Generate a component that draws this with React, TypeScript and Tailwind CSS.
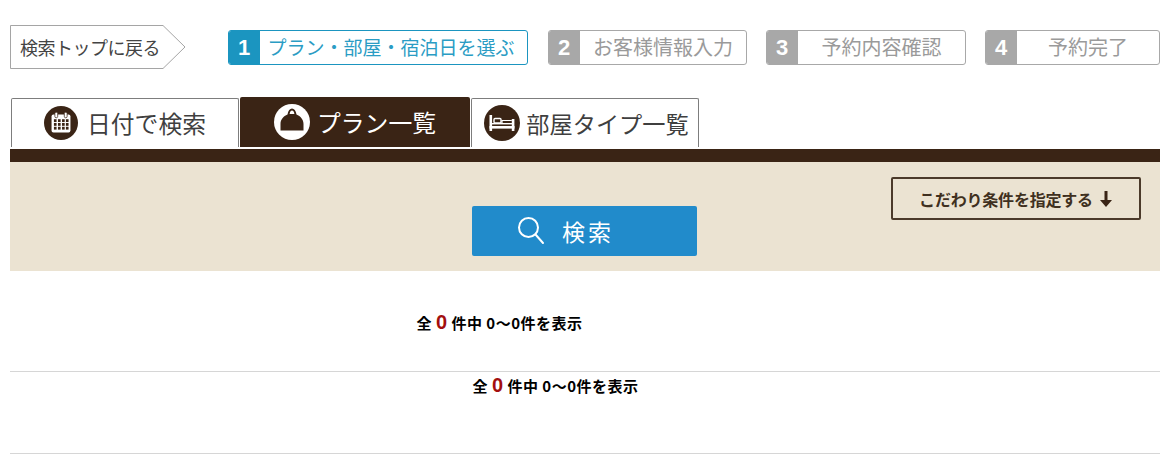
const FONT = "font-['Noto_Sans_CJK_JP','Liberation_Sans',sans-serif]";

interface Step {
  no: number;
  label: string;
  width: string;
  active?: boolean;
}

const STEPS: Step[] = [
  { no: 1, label: 'プラン・部屋・宿泊日を選ぶ', width: 'w-[300px] mr-px', active: true },
  { no: 2, label: 'お客様情報入力', width: 'w-[199px]' },
  { no: 3, label: '予約内容確認', width: 'w-[200px]' },
  { no: 4, label: '予約完了', width: 'w-[175px]' },
];

function StepBox({ step }: { step: Step }) {
  return (
    <div className={`${step.width} h-[35px] flex rounded-[3px] border bg-white overflow-hidden ${step.active ? 'border-[#1b95c0]' : 'border-[#a8a8a8]'}`}>
      <div className={`w-[32px] -ml-px -my-px flex items-center justify-center text-[22px] font-bold font-['Liberation_Sans',sans-serif] text-white ${step.active ? 'bg-[#1b95c0]' : 'bg-[#a8a8a8]'}`}>
        {step.no}
      </div>
      <div className={`flex-1 flex items-center justify-center ${step.active ? 'text-[19px] pr-[5px] text-[#2a9cc4]' : 'text-[20px] text-[#9a9a9a]'}`}>
        {step.label}
      </div>
    </div>
  );
}

function CalendarIcon() {
  return (
    <svg width="34" height="34" viewBox="0 0 36 36">
      <circle cx="18" cy="18" r="18" fill="#3a2415" />
      <rect x="8" y="9" width="20" height="19" rx="2" fill="#fff" />
      <rect x="11.5" y="6.5" width="3" height="6" rx="1.5" fill="#fff" stroke="#3a2415" strokeWidth="0.8" />
      <rect x="21.5" y="6.5" width="3" height="6" rx="1.5" fill="#fff" stroke="#3a2415" strokeWidth="0.8" />
      {[14, 18, 22].map(y =>
        [10.5, 14.8, 19.1, 23.2].map(x => <rect key={`${x}-${y}`} x={x} y={y} width="2.8" height="3" fill="#3a2415" />),
      )}
    </svg>
  );
}

function BagIcon() {
  return (
    <svg width="36" height="36" viewBox="0 0 36 36">
      <circle cx="18" cy="18" r="18" fill="#fff" />
      <path d="M6.5 26.5 V20 C6.5 15.5 9.5 12 13.5 10.5 C14 6.5 16 4.5 18 4.5 C20 4.5 22 6.5 22.5 10.5 C26.5 12 29.5 15.5 29.5 20 V26.5 Z" fill="#3a2415" />
      <path d="M15.6 10 C16 7.5 17 6.6 18 6.6 C19 6.6 20 7.5 20.4 10 Z" fill="#fff" />
    </svg>
  );
}

function BedIcon() {
  return (
    <svg width="36" height="36" viewBox="0 0 36 36">
      <circle cx="18" cy="18" r="18" fill="#3a2415" />
      <rect x="5.5" y="10" width="2.6" height="16" fill="#fff" />
      <rect x="27.8" y="14" width="2.6" height="12" fill="#fff" />
      <rect x="5.5" y="21" width="25" height="2.6" fill="#fff" />
      <rect x="8" y="18" width="20" height="1.4" fill="#fff" />
      <rect x="10" y="13.5" width="7" height="4.5" rx="1" fill="none" stroke="#fff" strokeWidth="1.4" />
      <path d="M18 18 V15.5 H27.8" fill="none" stroke="#fff" strokeWidth="1.2" />
    </svg>
  );
}

function Count({ className }: { className: string }) {
  return (
    <p className={`text-[15px] tracking-[0.5px] font-bold leading-[20px] text-black text-center whitespace-nowrap ${className}`}>
      全 <span className="text-[20px] leading-[20px] text-[#a30f0f] font-['Liberation_Sans',sans-serif]">0</span> 件中 0～0件を表示
    </p>
  );
}

export default function App() {
  return (
    <div className={`w-[1172px] h-[470px] bg-white overflow-hidden ${FONT}`}>
      <div className="flex items-center pl-[10px] pt-[25px] h-[69px]">
        <div className="relative w-[176px] h-[44px] flex items-center pl-[10px] text-[18px] tracking-[-0.5px] text-[#444]">
          <svg className="absolute inset-0" width="176" height="44" viewBox="0 0 176 44">
            <path d="M0.5 0.5 H153 L175 22 L153 43.5 H0.5 Z" fill="#fff" stroke="#a5a5a5" />
          </svg>
          <span className="relative">検索トップに戻る</span>
        </div>
        <div className="ml-[42px] flex gap-[19px]">
          {STEPS.map(s => <StepBox key={s.no} step={s} />)}
        </div>
      </div>

      <div className="flex items-end pl-[11px] pt-[28px] h-[78px] gap-px">
        <div className="w-[228px] h-[49px] border border-b-0 border-[#7d7d7d] rounded-t-[2px] bg-white flex items-center justify-center gap-[9px] text-[23.8px] text-[#3f3f3f]">
          <CalendarIcon />
          <span>日付で検索</span>
        </div>
        <div className="w-[230px] h-[50px] rounded-t-[2px] bg-[#3a2415] flex items-center justify-center gap-[7px] text-[23.8px] text-white">
          <BagIcon />
          <span>プラン一覧</span>
        </div>
        <div className="w-[228px] h-[49px] border border-b-0 border-[#7d7d7d] rounded-t-[2px] bg-white flex items-center justify-center gap-[6px] pl-[3px] text-[23.2px] text-[#3f3f3f]">
          <BedIcon />
          <span>部屋タイプ一覧</span>
        </div>
      </div>

      <div className="ml-[10px] mt-[2px] w-[1150px] h-[122px] border-t-[13px] border-[#3a2415] bg-[#ebe3d2] relative">
        <button className="absolute left-[462px] top-[44px] w-[225px] h-[50px] rounded-[2px] bg-[#218bcb] flex items-center justify-center gap-[17px] pr-[38px] text-white text-[23px] tracking-[3px]">
          <svg width="28" height="30" viewBox="0 0 28 30" fill="none" stroke="#fff" strokeWidth="2">
            <circle cx="11.5" cy="11.5" r="9.5" />
            <path d="M18.5 18.5 L26 27" strokeLinecap="round" />
          </svg>
          <span>検索</span>
        </button>
        <button className="absolute left-[881px] top-[15px] w-[250px] h-[43px] rounded-[2px] border-2 border-[#4b3a2a] flex items-center justify-center gap-[6px] text-[16px] font-bold tracking-[-0.2px] text-[#3f3020]">
          <span>こだわり条件を指定する</span>
          <svg width="14" height="18" viewBox="0 0 14 18">
            <path d="M5.5 1 H8.5 V10 H13 L7 17 L1 10 H5.5 Z" fill="#3a2415" />
          </svg>
        </button>
      </div>

      <div className="h-[101px] ml-[10px] w-[1150px] border-b border-[#d6d6d6] pt-[41px]">
        <Count className="w-[979px]" />
      </div>
      <div className="h-[82px] ml-[10px] w-[1150px] border-b border-[#d6d6d6] pt-[3px]">
        <Count className="w-[1091px]" />
      </div>
    </div>
  );
}
